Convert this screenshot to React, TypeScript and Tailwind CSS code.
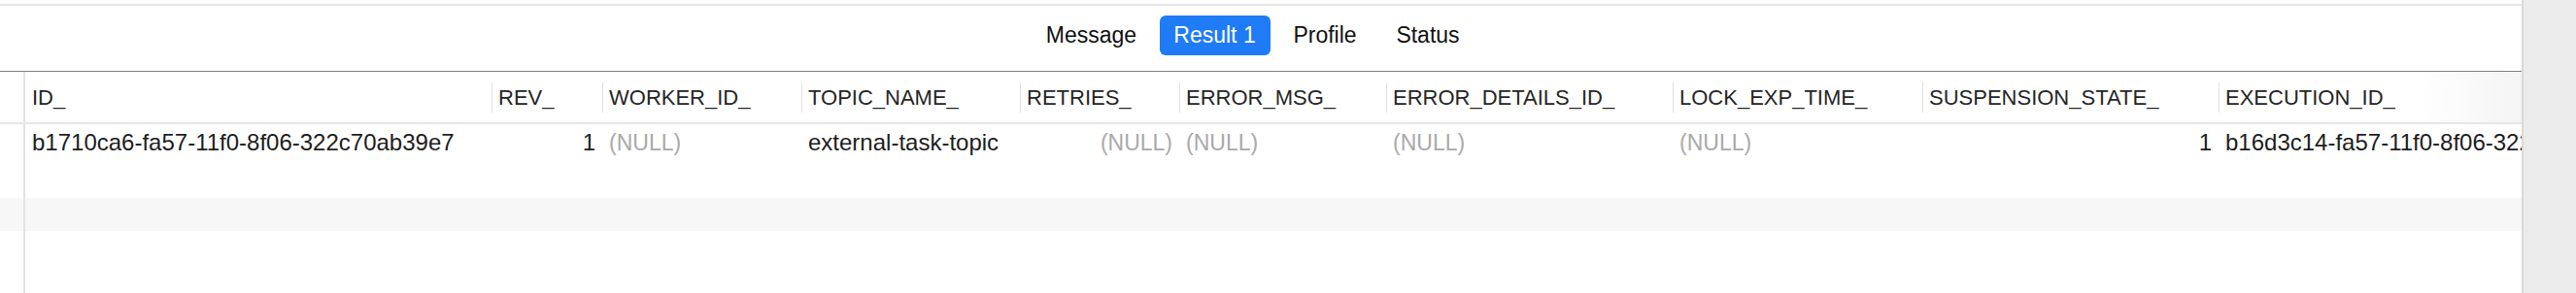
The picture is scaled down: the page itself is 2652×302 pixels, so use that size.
import React from "react";

type Col = { name: string; w: string; value?: string; isNull?: boolean; right?: boolean };

const cols: Col[] = [
  { name: "ID_", w: "w-[480px]", value: "b1710ca6-fa57-11f0-8f06-322c70ab39e7" },
  { name: "REV_", w: "w-[114px]", value: "1", right: true },
  { name: "WORKER_ID_", w: "w-[205px]", isNull: true },
  { name: "TOPIC_NAME_", w: "w-[225px]", value: "external-task-topic" },
  { name: "RETRIES_", w: "w-[164px]", isNull: true, right: true },
  { name: "ERROR_MSG_", w: "w-[213px]", isNull: true },
  { name: "ERROR_DETAILS_ID_", w: "w-[295px]", isNull: true },
  { name: "LOCK_EXP_TIME_", w: "w-[257px]", isNull: true },
  { name: "SUSPENSION_STATE_", w: "w-[305px]", value: "1", right: true },
  { name: "EXECUTION_ID_", w: "w-[420px]", value: "b16d3c14-fa57-11f0-8f06-322c70ab39e7" },
];

function Gutter({ className = "" }: { className?: string }) {
  return <div className={`w-[26px] shrink-0 border-r-2 border-[#e2e2e2] ${className}`} />;
}

export default function App() {
  return (
    <div
      className="flex h-[302px] w-[2652px] overflow-hidden bg-white text-[#1d1d1d]"
      style={{ fontFamily: '"Liberation Sans", Arial, sans-serif' }}
    >
      <div className="flex w-[2596px] shrink-0 flex-col overflow-hidden">
        <div className="mt-[4px] h-[2px] bg-[#e6e6e6]" />
        {/* tab bar */}
        <div className="flex h-[68px] shrink-0 items-start justify-center border-b border-[#808080] pr-[15px] pt-[10px]">
          <div className="flex h-[41px] items-center gap-[8px] text-[23px]">
            <div className="flex h-[41px] w-[124px] items-center justify-center text-[#111]">Message</div>
            <div className="flex h-[41px] w-[114px] items-center justify-center rounded-[6px] bg-[#1f7bf6] text-white">
              Result 1
            </div>
            <div className="flex h-[41px] w-[97px] items-center justify-center text-[#111]">Profile</div>
            <div className="flex h-[41px] w-[99px] items-center justify-center text-[#111]">Status</div>
          </div>
        </div>
        {/* table */}
        <div className="flex flex-1 flex-col overflow-hidden">
          {/* header */}
          <div className="flex h-[54px] shrink-0 border-b-2 border-[#e6e6e6] bg-[linear-gradient(to_right,#ffffff_96%,#f4f4f4)]">
            <Gutter />
            {cols.map((c, i) => (
              <div key={c.name} className={`flex shrink-0 items-center ${c.w}`}>
                {i > 0 ? <div className="h-[31px] w-px bg-[#e0e0e0]" /> : null}
                <span className={`whitespace-nowrap text-[22px] text-[#262626] ${i > 0 ? "pl-[6px]" : "pl-[7px]"}`}>
                  {c.name}
                </span>
              </div>
            ))}
          </div>
          {/* data row */}
          <div className="flex h-[38px] shrink-0">
            <Gutter />
            {cols.map((c) => (
              <div
                key={c.name}
                className={`flex shrink-0 items-center overflow-hidden whitespace-nowrap ${c.w} ${
                  c.right ? "justify-end pr-[7px]" : "pl-[7px]"
                }`}
              >
                {c.isNull ? (
                  <span className="text-[23px] text-[#a9a9a9]">(NULL)</span>
                ) : (
                  <span className="text-[24px] text-[#1d1d1d]">{c.value}</span>
                )}
              </div>
            ))}
          </div>
          <div className="flex h-[38px] shrink-0">
            <Gutter />
          </div>
          <div className="flex h-[34px] shrink-0 bg-[#f7f7f7]">
            <Gutter />
          </div>
          <div className="flex flex-1">
            <Gutter />
          </div>
        </div>
      </div>
      <div className="flex-1 border-l-2 border-[#dadada] bg-[#ebebeb]" />
    </div>
  );
}
